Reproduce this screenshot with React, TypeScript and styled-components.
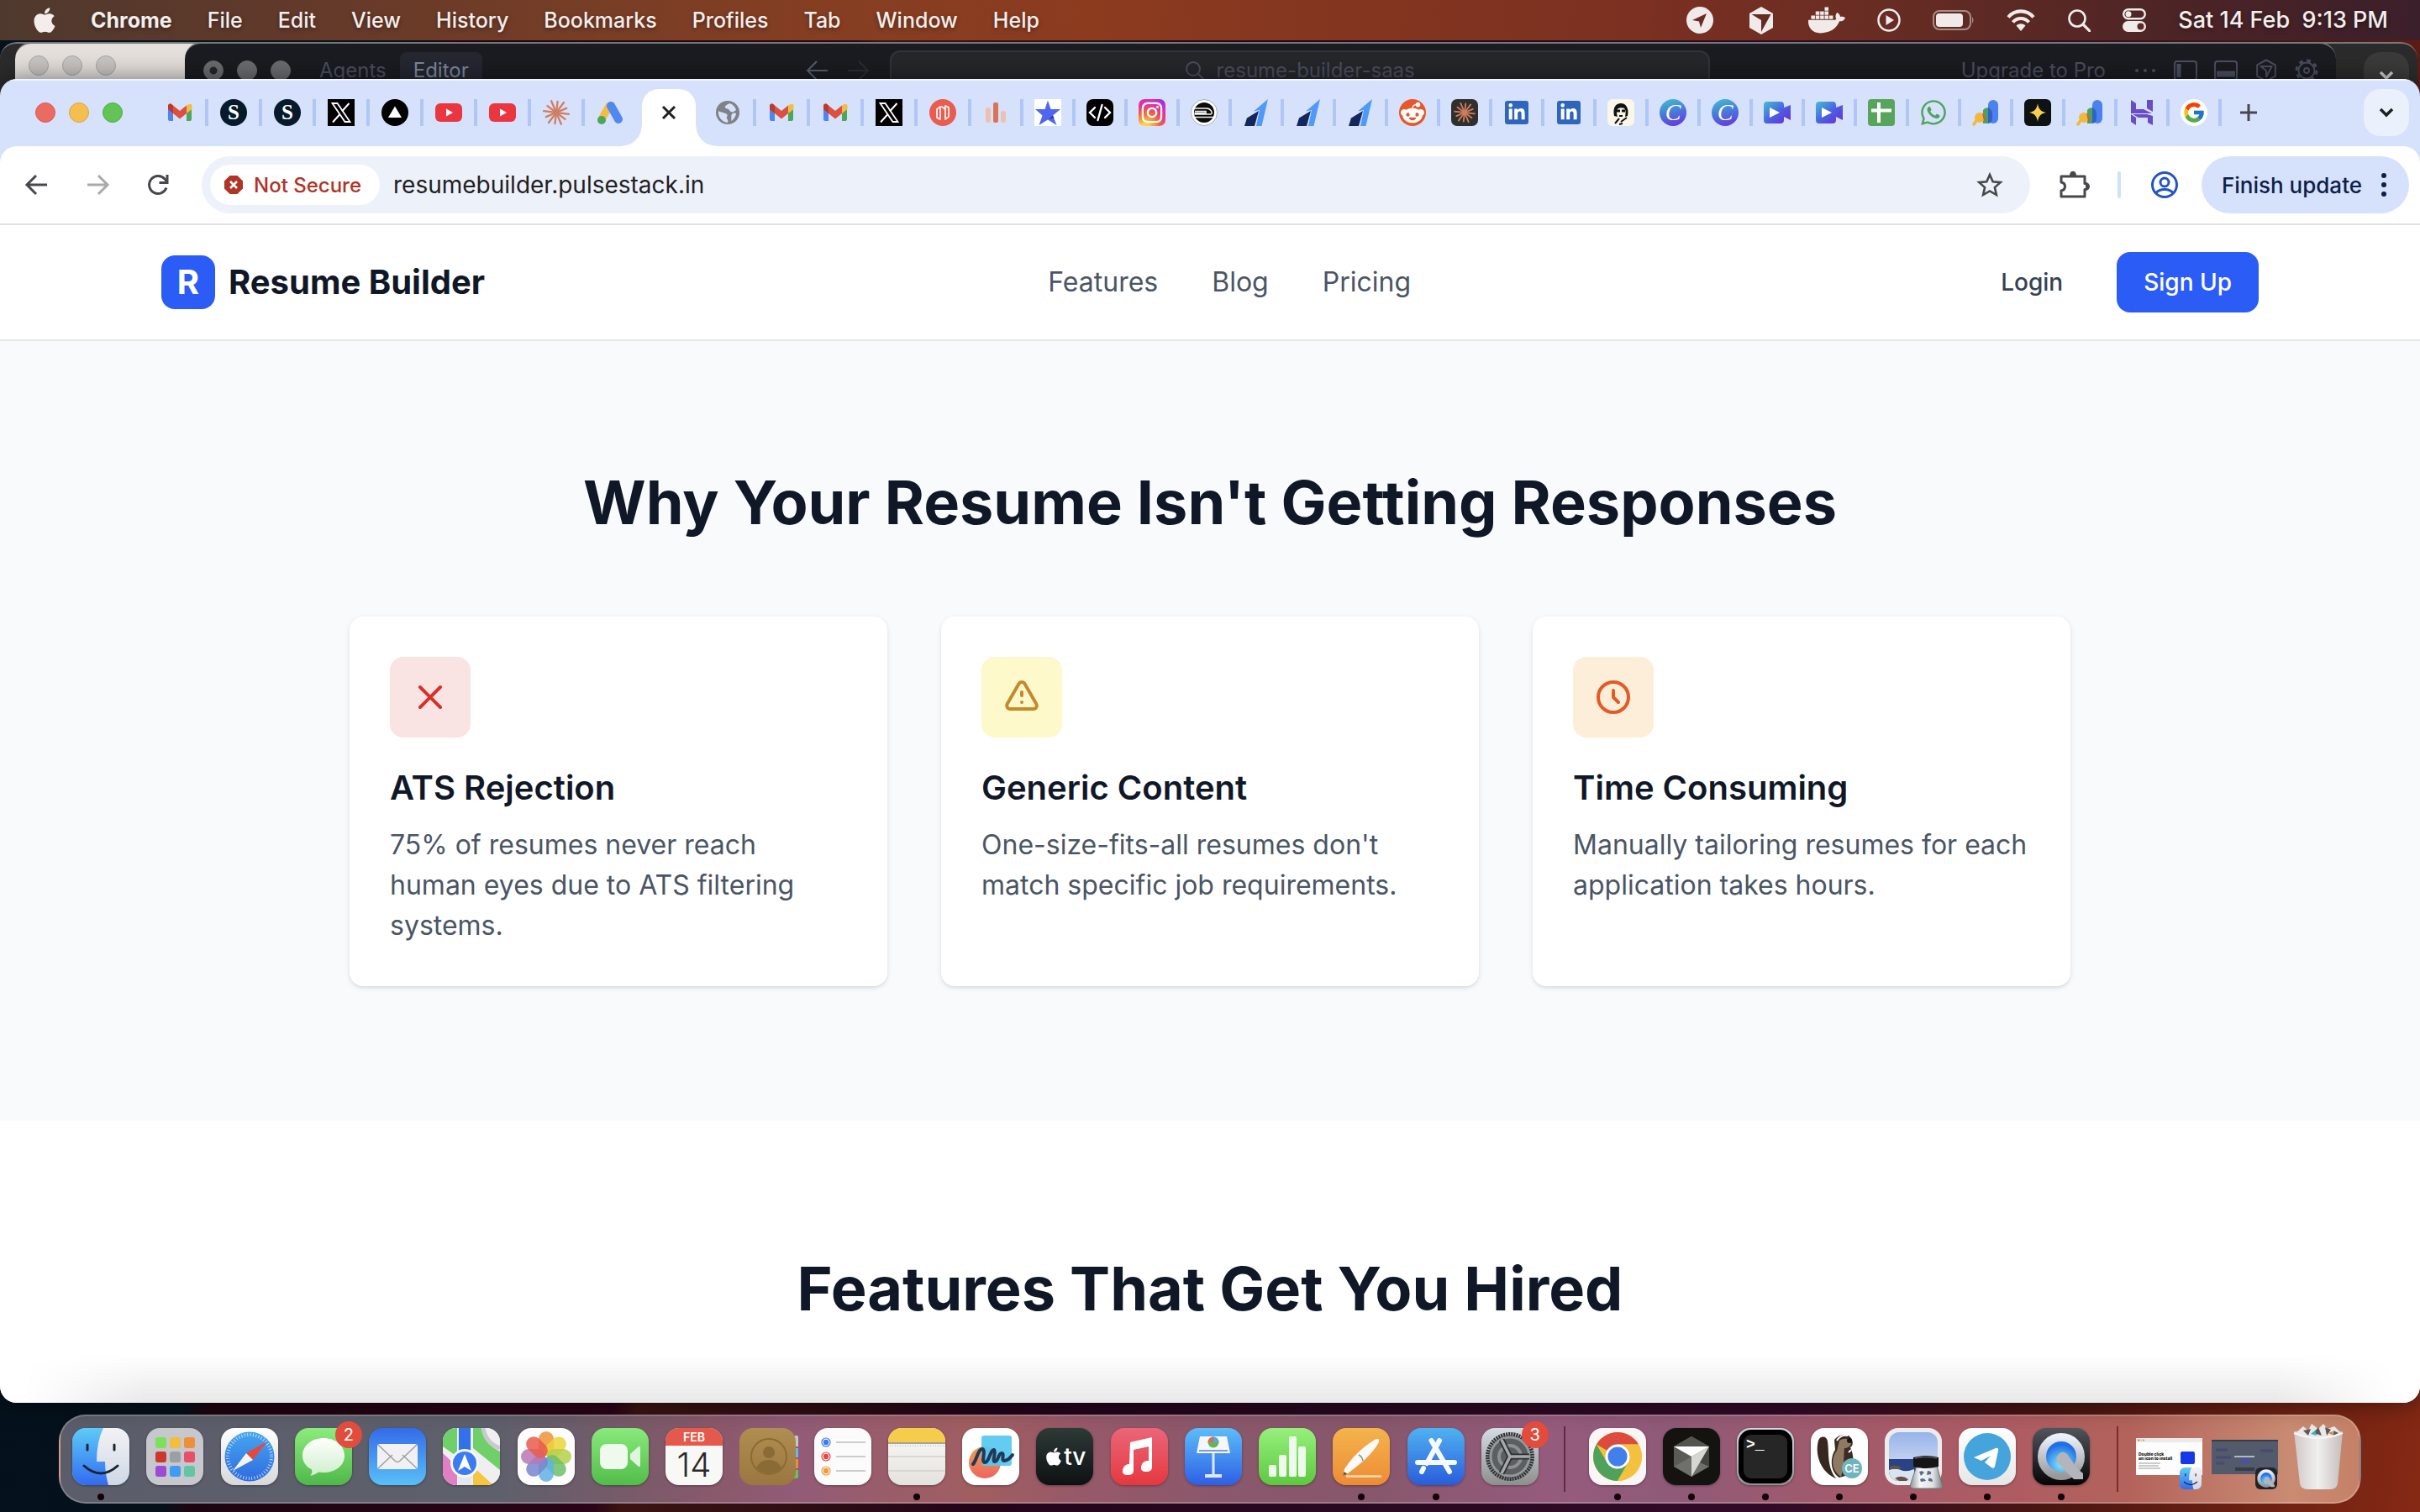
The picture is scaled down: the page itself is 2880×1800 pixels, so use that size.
import React, { ReactNode } from "react";
import styled, { createGlobalStyle } from "styled-components";
import { FaApple, FaDocker, FaLinkedinIn, FaWhatsapp, FaInstagram, FaRedditAlien } from "react-icons/fa6";
import { FcGoogle } from "react-icons/fc";

const GlobalStyle = createGlobalStyle`
  * { box-sizing: border-box; }
  body { margin: 0; font-family: Inter, "Liberation Sans", sans-serif; }
  button, input { font: inherit; color: inherit; border: 0; padding: 0; background: none; }
  a { color: inherit; text-decoration: none; }
  h1, h2, h3, p { margin: 0; }
  svg { display: block; flex: none; }
`;

/* ---------- Desktop ---------- */

const Desktop = styled.div`
  height: 100vh;
  display: flex;
  flex-direction: column;
  overflow: hidden;
  background: linear-gradient(100deg, #04121d 0%, #05101b 16%, #1e0410 17%, #2a0418 32%, #3b1412 33%, #2c0c14 41%, #22051a 46%, #2a0922 62%, #320a28 76%, #4a1612 86%, #862914 100%);
`;

const MenuBar = styled.header`
  height: 48px;
  flex: none;
  display: flex;
  align-items: center;
  justify-content: space-between;
  padding: 0 38px 0 40px;
  font-size: 25px;
  line-height: 32px;
  color: #f3eeec;
  text-shadow: 0 2px 5px rgba(0, 0, 0, 0.4);
  background: linear-gradient(90deg, #4f392e 0%, #62392a 12%, #783e26 25%, #853e22 34%, #8c3b1f 45%, #85361f 54%, #7b3021 68%, #672c23 78%, #4c2426 90%, #3b1f2a 100%);
`;

const MenuItems = styled.nav`
  display: flex;
  align-items: center;
  gap: 42px;
`;

const AppleMark = styled(FaApple)`
  width: 26px;
  height: 34px;
`;

const MenuButton = styled.button<{ $bold?: boolean }>`
  font-weight: ${(p) => (p.$bold ? 700 : 500)};
  text-shadow: inherit;
`;

const StatusItems = styled.div`
  display: flex;
  align-items: center;
  gap: 38px;
`;

const Clock = styled.time`
  font-size: 27px;
  font-weight: 500;
  white-space: pre;
`;

const BackWindows = styled.div`
  position: relative;
  height: 46px;
  flex: none;
`;

const BackWindow = styled.section<{ $left: number; $right: string; $bg: string }>`
  position: absolute;
  top: 2px;
  left: ${(p) => p.$left}px;
  right: ${(p) => p.$right};
  height: 80px;
  border-radius: 20px 20px 0 0;
  border-top: 2px solid #77787a;
  background: ${(p) => p.$bg};
  display: flex;
  align-items: flex-start;
  color: #4b5061;
  font-size: 24px;
  line-height: 32px;
`;

const Lights = styled.div<{ $pad: string }>`
  display: flex;
  gap: 16px;
  padding: ${(p) => p.$pad};
`;

const Light = styled.i<{ $color: string; $edge?: string; $dot?: boolean }>`
  width: 24px;
  height: 24px;
  border-radius: 50%;
  border: 1px solid ${(p) => p.$edge || p.$color};
  background: ${(p) => (p.$dot ? `radial-gradient(#26272a 4px, ${p.$color} 5px)` : p.$color)};
`;

const EditorTabs = styled.div`
  display: flex;
  padding: 10px 0 0 18px;
`;

const EditorTab = styled.button<{ $active?: boolean }>`
  height: 44px;
  padding: 0 16px;
  border-radius: 8px;
  color: ${(p) => (p.$active ? "#8189a0" : "#4b5061")};
  background: ${(p) => (p.$active ? "#252831" : "transparent")};
`;

const EditorCenter = styled.div`
  flex: 1;
  display: flex;
  justify-content: center;
  gap: 22px;
  padding: 8px 0 0 84px;
`;

const EditorArrows = styled.div`
  display: flex;
  gap: 16px;
  padding-top: 8px;
`;

const EditorSearch = styled.button`
  width: 976px;
  height: 48px;
  border: 2px solid #32343e;
  border-radius: 12px;
  background: #26272b;
  display: flex;
  align-items: center;
  justify-content: center;
  gap: 14px;
`;

const EditorTools = styled.div`
  display: flex;
  align-items: center;
  gap: 18px;
  padding: 16px 20px 0 0;
`;

const BackChevron = styled.span`
  margin: 10px 10px 0 auto;
  width: 54px;
  height: 56px;
  border-radius: 20px;
  background: #3b3b3b;
  display: grid;
  place-items: center;
`;

/* ---------- Browser ---------- */

const Browser = styled.section`
  position: relative;
  flex: 1;
  min-height: 0;
  display: flex;
  flex-direction: column;
  overflow: hidden;
  border-radius: 20px;
  background: #d6e1fb;
  box-shadow: 0 0 30px rgba(0, 0, 0, 0.5);
`;

const TabStrip = styled.div`
  height: 80px;
  flex: none;
  display: flex;
  align-items: center;
  box-shadow: inset 0 2px #f1f5fe;
`;

const TabSlot = styled.button<{ $wide?: boolean; $last?: boolean }>`
  width: ${(p) => (p.$wide ? 64 : 62)}px;
  height: 32px;
  display: flex;
  align-items: center;
  justify-content: center;
  border-right: 4px solid transparent;
  background: linear-gradient(${(p) => (p.$last ? "transparent, transparent" : "#afc6f6, #afc6f6")}) right / 4px 32px no-repeat border-box;
`;

const ActiveTab = styled.button`
  position: relative;
  align-self: flex-end;
  width: 64px;
  height: 68px;
  margin: 0 8px 0 4px;
  padding-bottom: 12px;
  border-radius: 20px 20px 0 0;
  background: #fff;
  display: grid;
  place-items: center;
  &::before, &::after {
    content: "";
    position: absolute;
    bottom: 0;
    width: 24px;
    height: 24px;
  }
  &::before { right: 100%; background: radial-gradient(circle at 0 0, transparent 23px, #fff 24px); }
  &::after { left: 100%; background: radial-gradient(circle at 100% 0, transparent 23px, #fff 24px); }
`;

const NewTab = styled.button`
  width: 64px;
  display: grid;
  place-items: center;
`;

const TabSearch = styled.button`
  margin: 0 13px 0 auto;
  width: 54px;
  height: 56px;
  border-radius: 20px;
  background: #eaf1fc;
  display: grid;
  place-items: center;
`;

const Toolbar = styled.div`
  height: 94px;
  flex: none;
  display: flex;
  align-items: center;
  padding: 0 13px 0 28px;
  border-radius: 20px 20px 0 0;
  border-bottom: 2px solid #e1e2e4;
  background: #fff;
  color: #47484b;
`;

const ToolButtons = styled.div`
  display: flex;
  gap: 40px;
  margin-right: 36px;
`;

const IconButton = styled.button`
  display: grid;
  place-items: center;
`;

const Omnibox = styled.div`
  flex: 1;
  height: 68px;
  border-radius: 34px;
  background: #edf1f9;
  display: flex;
  align-items: center;
  padding: 0 32px 0 10px;
`;

const SecurityChip = styled.button`
  height: 48px;
  padding: 0 22px 0 16px;
  border-radius: 24px;
  background: #fff;
  color: #b03427;
  font-size: 24px;
  font-weight: 500;
  display: flex;
  align-items: center;
  gap: 12px;
`;

const Address = styled.input`
  flex: 1;
  margin-left: 16px;
  font-size: 28px;
  line-height: 32px;
  color: #1f2023;
  outline: none;
`;

const ToolDivider = styled.span`
  width: 4px;
  height: 32px;
  margin-right: 36px;
  border-radius: 2px;
  background: #d3e0fb;
`;

const UpdateButton = styled.button`
  height: 68px;
  margin-left: 28px;
  padding: 0 24px;
  border-radius: 34px;
  background: #d6e1fb;
  color: #0c1f4a;
  font-size: 26px;
  font-weight: 500;
  display: flex;
  align-items: center;
  gap: 20px;
`;

/* ---------- Web page ---------- */

const Page = styled.main`
  flex: 1;
  min-height: 0;
  overflow: hidden;
  display: flex;
  flex-direction: column;
  background: #fff;
  color: #101828;
`;

const SiteHeader = styled.header`
  flex: none;
  border-bottom: 2px solid #e5e7eb;
`;

const SiteHeaderInner = styled.div`
  max-width: 2560px;
  height: 136px;
  margin: 0 auto;
  padding: 0 32px;
  display: flex;
  align-items: center;
  justify-content: space-between;
`;

const Brand = styled.a`
  display: flex;
  align-items: center;
  gap: 16px;
  font-size: 40px;
  line-height: 56px;
  font-weight: 700;
`;

const BrandMark = styled.span`
  width: 64px;
  height: 64px;
  border-radius: 16px;
  background: #2c5cf6;
  color: #fff;
  display: grid;
  place-items: center;
`;

const SiteLinks = styled.nav`
  display: flex;
  gap: 64px;
  font-size: 32px;
  line-height: 48px;
  color: #4a5565;
`;

const Actions = styled.div`
  display: flex;
  gap: 32px;
`;

const ActionButton = styled.button<{ $primary?: boolean }>`
  height: 72px;
  padding: 0 32px;
  border-radius: 16px;
  font-size: 28px;
  font-weight: 500;
  color: ${(p) => (p.$primary ? "#fff" : "#364153")};
  background: ${(p) => (p.$primary ? "#2c5cf6" : "transparent")};
`;

const Problems = styled.section`
  flex: none;
  padding: 152px 32px 160px;
  background: #f9fafc;
`;

const Features = styled.section`
  padding: 160px 32px;
`;

const SectionTitle = styled.h2`
  font-size: 72px;
  line-height: 80px;
  font-weight: 700;
  text-align: center;
`;

const CardGrid = styled.div`
  max-width: 2048px;
  margin: 96px auto 0;
  display: grid;
  grid-template-columns: repeat(3, 1fr);
  gap: 64px;
`;

const Card = styled.article`
  padding: 48px;
  border-radius: 16px;
  background: #fff;
  box-shadow: 0 2px 6px rgba(0, 0, 0, 0.1), 0 2px 4px -2px rgba(0, 0, 0, 0.1);
`;

const CardIcon = styled.div<{ $bg: string; $color: string }>`
  width: 96px;
  height: 96px;
  margin-bottom: 32px;
  border-radius: 16px;
  background: ${(p) => p.$bg};
  color: ${(p) => p.$color};
  display: grid;
  place-items: center;
`;

const CardTitle = styled.h3`
  margin-bottom: 16px;
  font-size: 40px;
  line-height: 56px;
  font-weight: 600;
`;

const CardText = styled.p`
  font-size: 32px;
  line-height: 48px;
  color: #4a5565;
`;

const DockShade = styled.div`
  position: absolute;
  left: 0;
  right: 0;
  bottom: 0;
  height: 56px;
  pointer-events: none;
  background: linear-gradient(rgba(0, 0, 0, 0), rgba(0, 0, 0, 0.09));
  mask-image: linear-gradient(90deg, transparent 1%, #000 6%, #000 94%, transparent 99%);
`;

/* ---------- Dock ---------- */

const DockArea = styled.footer`
  height: 130px;
  flex: none;
  padding: 14px 70px 10px;
`;

const Dock = styled.div`
  height: 106px;
  display: flex;
  align-items: flex-start;
  padding: 14px 19px 0 14px;
  border: 2px solid rgba(255, 255, 255, 0.22);
  border-radius: 32px;
  background: linear-gradient(90deg, #5b5e6a 0%, #5e606c 19%, #7a5a69 25%, #8b596c 29%, #925b78 32%, #9c5d66 37%, #a05e60 40%, #985969 44%, #8b586b 50%, #87576c 57%, #955b7d 65%, #8f5a78 70%, #a15a6c 77%, #ae5c62 85%, #b3635b 90%, #c98b72 97%, #c58167 100%);
`;

const DockGroup = styled.div<{ $grow?: boolean }>`
  display: flex;
  gap: 20px;
  flex: ${(p) => (p.$grow ? "1" : "none")};
  justify-content: space-between;
`;

const DockDivider = styled.span<{ $color: string; $tight?: boolean }>`
  width: 2px;
  height: 78px;
  margin: ${(p) => (p.$tight ? "-2px 21px 0 32px" : "-2px 28px 0 30px")};
  background: ${(p) => p.$color};
`;

const DockItem = styled.button`
  position: relative;
  width: 68px;
  display: flex;
  flex-direction: column;
  align-items: center;
  gap: 10px;
`;

const Tile = styled.span<{ $bg: string }>`
  position: relative;
  width: 68px;
  height: 68px;
  border-radius: 16px;
  overflow: hidden;
  background: ${(p) => p.$bg};
  box-shadow: 0 1px 3px rgba(0, 0, 0, 0.35);
`;

const FreeTile = styled.span`
  width: 68px;
  height: 68px;
`;

const RunningDot = styled.span`
  width: 8px;
  height: 8px;
  border-radius: 50%;
  background: #120208;
`;

const Badge = styled.span`
  position: absolute;
  top: -8px;
  right: -12px;
  width: 32px;
  height: 32px;
  border-radius: 50%;
  background: #e24c3c;
  color: #fff;
  font-size: 20px;
  line-height: 32px;
  text-align: center;
`;

const CalendarFace = styled.span`
  display: flex;
  flex-direction: column;
  align-items: center;
  color: #2a2a2a;
  font-size: 40px;
  line-height: 46px;
  font-weight: 300;
`;

const CalendarMonth = styled.span`
  width: 100%;
  height: 21px;
  background: #e4594c;
  color: #fff;
  font-size: 14px;
  line-height: 22px;
  font-weight: 600;
  text-align: center;
`;

const TvFace = styled.span`
  height: 100%;
  display: flex;
  align-items: center;
  justify-content: center;
  color: #fff;
  font-size: 28px;
  line-height: 32px;
  font-weight: 500;
`;

const TerminalFace = styled.span`
  display: block;
  height: 64px;
  margin: 2px;
  padding: 2px 3px;
  border: 6px solid #000;
  border-radius: 15px;
  background: #262626;
  color: #fff;
  font-family: "Liberation Mono", monospace;
  font-size: 18px;
  line-height: 20px;
  font-weight: 700;
  text-align: left;
`;

const Thumbs = styled.div`
  display: flex;
  gap: 11px;
  margin-right: 18px;
`;

const Thumb = styled.button`
  padding-top: 12px;
`;

const TrashButton = styled.button`
  margin-top: -6px;
`;

/* ---------- Favicons ---------- */

const FavBox = styled.span<{ $bg: string; $radius: number; $size?: number; $serif?: boolean; $fs?: number }>`
  width: ${(p) => p.$size || 32}px;
  height: ${(p) => p.$size || 32}px;
  border-radius: ${(p) => p.$radius}px;
  background: ${(p) => p.$bg};
  color: #fff;
  display: grid;
  place-items: center;
  overflow: hidden;
  font-family: ${(p) => (p.$serif ? '"Liberation Serif", serif' : "inherit")};
  font-size: ${(p) => p.$fs || 22}px;
  line-height: 32px;
  font-weight: 700;
`;

const ScriptC = styled.i`
  font-family: "Liberation Serif", serif;
  font-size: 28px;
  font-weight: 400;
  line-height: 32px;
`;

const Svg = ({ s = 32, h, vb, children }: { s?: number; h?: number; vb?: string; children: ReactNode }) => (
  <svg width={s} height={h || s} viewBox={vb || `0 0 ${s} ${h || s}`} fill="none" aria-hidden="true">
    {children}
  </svg>
);

const Gmail = () => (
  <Svg>
    <path d="M2 8v16a2 2 0 0 0 2 2h4V14z" fill="#4d86ee" />
    <path d="M30 8v16a2 2 0 0 1-2 2h-4V14z" fill="#4ea65a" />
    <path d="M24 7.500 27 6c2-1 3.500.5 3.500 2.500V12L24 17z" fill="#f3bd42" />
    <path d="M2 8.500C2 6 4 5 6 6l10 8 8-6.500V17l-8 6.500L8 17l-6-5z" fill="#dd4f3e" />
    <path d="M2 8.500C2 6 4 5 6 6l2 1.600V17l-6-5z" fill="#b93a30" />
  </Svg>
);

const Stripe = () => <FavBox $bg="#071a2b" $radius={16} $serif $fs={25}>S</FavBox>;

const XLogo = () => (
  <FavBox $bg="#000" $radius={0}>
    <Svg>
      <path d="M5.500 5h6L26.500 27h-6z" stroke="#fff" strokeWidth="1.800" />
      <path d="M25.500 5 17 14.500M14.500 18 6 27.500" stroke="#fff" strokeWidth="2" />
    </Svg>
  </FavBox>
);

const Vercel = () => (
  <FavBox $bg="#000" $radius={16}>
    <Svg><path d="M16 8.500 24 22H8z" fill="#fff" /></Svg>
  </FavBox>
);

const Youtube = () => (
  <Svg>
    <rect x="0" y="5" width="32" height="22" rx="6" fill="#eb3640" />
    <path d="M13 11.500v9l8-4.500z" fill="#fff" />
  </Svg>
);

const Burst = ({ color, r }: { color: string; r: number }) => (
  <g stroke={color} strokeWidth={r / 6.5} strokeLinecap="round">
    {Array.from({ length: 12 }, (_, i) => {
      const a = (i * Math.PI) / 6 + 0.12;
      const len = r * (i % 2 ? 0.88 : 1);
      return <path key={i} d={`M16 16L${16 + Math.cos(a) * len} ${16 + Math.sin(a) * len}`} />;
    })}
  </g>
);

const Claude = () => <Svg><Burst color="#cf7f63" r={15} /></Svg>;
const ClaudeDark = () => <FavBox $bg="#2f302d" $radius={7}><Svg><Burst color="#d07c5e" r={12} /></Svg></FavBox>;

const Ads = () => (
  <Svg>
    <path d="M15 8 6 24" stroke="#f2bd42" strokeWidth="9" strokeLinecap="round" />
    <path d="M17 8l9 16" stroke="#4f88ef" strokeWidth="10" strokeLinecap="round" />
    <circle cx="6" cy="25" r="5" fill="#4fa45c" />
  </Svg>
);

const Globe = () => (
  <Svg>
    <circle cx="16" cy="16" r="14" fill="#7f8286" />
    <path d="M5 14c3 2 8 2 10 4s-1 3 0 5 2 3 1 5C9 27 4 21 5 14z" fill="#d6e1fb" />
    <path d="M18 5c-3 2-6 3-5 5s4 1 5 3 3 3 5 2l3-2C25 9 22 6 18 5zM22 17c3-1 4 0 4 1-1 4-4 7-6 8 1-3-1-7 2-9z" fill="#d6e1fb" />
  </Svg>
);

const MapPin = () => (
  <FavBox $bg="#ea5b50" $radius={16}>
    <Svg>
      <path d="M13 24 9 22V12l4-3zM19 8l4 2v11l-4 3z" stroke="#fbe3df" strokeWidth="2" strokeLinejoin="round" />
      <path d="M13 9c3 0 6 2 6 5" stroke="#fbe3df" strokeWidth="2" />
    </Svg>
  </FavBox>
);

const Bars = () => (
  <Svg>
    <rect x="4" y="10" width="6" height="18" rx="3" fill="#ecc0b4" />
    <rect x="13" y="4" width="6" height="24" rx="2" fill="#d97556" />
    <rect x="22" y="14" width="6" height="14" rx="3" fill="#ecc0b4" />
  </Svg>
);

const Star = () => (
  <FavBox $bg="#fff" $radius={0}>
    <Svg>
      <path d="M16 1.500 19.500 12H31l-9 7.500L26.500 31 16 24.500 5.500 31 9.500 19.500 1 12h11.500z" fill="#5166f0" />
      <path d="M22 19.500 17 24l6.500-1.500z" fill="#2c36a8" />
    </Svg>
  </FavBox>
);

const Code = () => (
  <FavBox $bg="#000" $radius={8}>
    <Svg><path d="M10 10l-6 6 6 6M22 10l6 6-6 6M18.500 7l-5 18" stroke="#fff" strokeWidth="2.400" strokeLinecap="round" /></Svg>
  </FavBox>
);

const Insta = () => (
  <FavBox $bg="radial-gradient(circle at 25% 105%, #f9d24c 0 12%, #f0653e 42%, #e0359a 66%, #d12fc4 80%, #6a2cf0 100%)" $radius={7}>
    <FaInstagram size={28} />
  </FavBox>
);

const Disc = () => (
  <Svg>
    <circle cx="16" cy="16" r="15.500" fill="#fff" stroke="#a9adb8" />
    <circle cx="16" cy="16" r="12" fill="#0b0b0b" />
    <path d="M5 11h14c5 0 8 6 5 7H4.500M5 14.500h13v2H4.500M5 21.500h23" stroke="#f4f4f4" strokeWidth="1.500" />
  </Svg>
);

const Jet = () => (
  <Svg>
    <path d="M30 0 13 14.500l7-1.500-4 19h6.500z" fill="#4f9af8" />
    <path d="M19 14 5 22.500 2 32h12z" fill="#14275c" />
  </Svg>
);

const Reddit = () => (
  <FavBox $bg="#e8562c" $radius={16}><FaRedditAlien size={28} /></FavBox>
);

const LinkedIn = () => <FavBox $bg="#2f65bc" $radius={3} $size={28}><FaLinkedinIn size={22} /></FavBox>;

const Portrait = () => (
  <FavBox $bg="#fbf6ea" $radius={6}>
    <Svg>
      <path d="M8 20C6 10 10 5 16 5s10 6 8 15l-3 1c1-5 1-8-1-10-2-1-5-1-7 0-3 2-2 6-1 10z" fill="#111" />
      <path d="M11 14h4M17 14h4" stroke="#111" strokeWidth="3" />
      <path d="M14 20h4M9 29l5-6M16 27l7-5M14 30l4-1" stroke="#111" strokeWidth="2" />
    </Svg>
  </FavBox>
);

const Canva = () => <FavBox $bg="linear-gradient(165deg, #3fc3cf, #4a76dc 50%, #6a2ee0)" $radius={16}><ScriptC>C</ScriptC></FavBox>;

const VideoCam = () => (
  <Svg>
    <defs>
      <linearGradient id="cam" x1="0" y1="0" x2="1" y2="1">
        <stop stopColor="#47bcd6" /><stop offset=".5" stopColor="#4a62e0" /><stop offset="1" stopColor="#7027dc" />
      </linearGradient>
    </defs>
    <path d="M4 3h16a4 4 0 0 1 4 4v3l8-3v18l-8-4v4a4 4 0 0 1-4 4H4a4 4 0 0 1-4-4V7a4 4 0 0 1 4-4z" fill="url(#cam)" />
    <path d="M7 10v12l12-6z" fill="#fff" />
  </Svg>
);

const Sheet = () => (
  <FavBox $bg="#57a55a" $radius={4}>
    <Svg><path d="M4 13.500h24M13 4v24" stroke="#fff" strokeWidth="4" /></Svg>
  </FavBox>
);

const Analytics = () => (
  <Svg>
    <rect x="19" y="1" width="12" height="28" rx="6" fill="#4c82ee" />
    <path d="M13 13a6 6 0 0 1 11 4v6a6 6 0 0 1-6 6h-5z" fill="#4fa05a" />
    <path d="M19 9.500q5 3 5 8V23a6 6 0 0 1-5 6z" fill="#2f62cc" />
    <path d="M2 30l6-9" stroke="#f0b93c" strokeWidth="3.500" strokeLinecap="round" />
    <circle cx="9" cy="22" r="6" fill="#f0b93c" />
    <path d="M12 16.500a7 7 0 0 1 2 10z" fill="#e0523e" />
  </Svg>
);

const Sparkle = () => (
  <FavBox $bg="#0e1213" $radius={6}>
    <Svg><path d="M16 5c1 7 4 10 10 11-6 1-9 4-10 11-1-7-4-10-10-11 6-1 9-4 10-11z" fill="#f6d24a" /></Svg>
  </FavBox>
);

const HLogo = () => (
  <Svg>
    <path d="M3 1l6 4v7h9l10 5H3zM22 1h7v14l-7-4z" fill="#6a4cc6" />
    <path d="M3 18l6 4v9l-6-4zM5 18h17l7 2v11l-6-3v-6H12z" fill="#6a4cc6" />
  </Svg>
);

const Google = () => <FavBox $bg="#fff" $radius={16}><FcGoogle size={28} /></FavBox>;
const Whatsapp = () => <FaWhatsapp size={34} color="#4fa35f" />;

type Tab = [string, () => React.JSX.Element];

const leftTabs: Tab[] = [
  ["Mail", Gmail], ["Payments", Stripe], ["Payments", Stripe], ["X", XLogo], ["Deployments", Vercel],
  ["YouTube", Youtube], ["YouTube", Youtube], ["Claude", Claude], ["Ads", Ads],
];
const middleTabs: Tab[] = [
  ["Page", Globe], ["Mail", Gmail], ["Mail", Gmail], ["X", XLogo], ["Map", MapPin],
];
const rightTabs: Tab[] = [
  ["Stats", Bars], ["Star", Star], ["Code", Code], ["Instagram", Insta], ["Disc", Disc],
  ["Jet", Jet], ["Jet", Jet], ["Jet", Jet], ["Reddit", Reddit], ["Claude", ClaudeDark],
  ["LinkedIn", LinkedIn], ["LinkedIn", LinkedIn], ["Portrait", Portrait], ["Canva", Canva], ["Canva", Canva],
  ["Video", VideoCam], ["Video", VideoCam], ["Sheet", Sheet], ["WhatsApp", Whatsapp], ["Analytics", Analytics],
  ["Sparkle", Sparkle], ["Analytics", Analytics], ["Hosting", HLogo], ["Google", Google],
];

/* ---------- Interface glyphs ---------- */

const Chevron = ({ color }: { color: string }) => (
  <Svg s={20}><path d="M3 6l7 7 7-7" stroke={color} strokeWidth="3.500" /></Svg>
);

const Arrow = ({ color, flip, w = 3 }: { color: string; flip?: boolean; w?: number }) => (
  <Svg s={32}>
    <path d={flip ? "M4 16h23M17 5l11 11-11 11" : "M28 16H5M15 5L4 16l11 11"} stroke={color} strokeWidth={w} />
  </Svg>
);

const Cube = ({ s, color, line }: { s: number; color: string; line?: boolean }) => (
  <Svg s={s} vb="0 0 36 36">
    {line ? (
      <path d="M18 3l13 7v16l-13 7-13-7V10zM10 12h16l-8 15v-9z" stroke={color} strokeWidth="2.400" strokeLinejoin="round" />
    ) : (
      <>
        <path d="M18 2l14 8v17l-14 8-14-8V10z" fill={color} />
        <path d="M6.500 11h23L18 32V18z" fill="#642b23" />
      </>
    )}
  </Svg>
);

const StatusIcons = () => (
  <>
    <Svg s={34}>
      <circle cx="17" cy="17" r="16" fill="#f0ebe9" />
      <path d="M25 9 8 17l8 1.500L18 26z" fill="#6a2b22" />
    </Svg>
    <Cube s={36} color="#f0ebe9" />
    <FaDocker size={44} color="#f0ebe9" />
    <Svg s={28} h={30}>
      <circle cx="14" cy="15" r="12.500" stroke="#f0ebe9" strokeWidth="2.500" />
      <path d="M10.500 9v12l9.500-6z" fill="#f0ebe9" />
    </Svg>
    <Svg s={50} h={26}>
      <rect x="1" y="2" width="44" height="22" rx="7" stroke="#f0ebe9" strokeOpacity=".5" strokeWidth="2" />
      <rect x="4" y="5" width="32" height="16" rx="4" fill="#f0ebe9" />
      <path d="M47 9q3 4 0 8z" fill="#f0ebe9" fillOpacity=".5" />
    </Svg>
    <Svg s={34} h={28}>
      <path d="M2 10.500C10 1 24 1 32 10.500M7.500 16.500c5-6 14-6 19 0" stroke="#f0ebe9" strokeWidth="4.200" />
      <path d="M11.500 20.500c3-3 8-3 11 0L17 27z" fill="#f0ebe9" />
    </Svg>
    <Svg s={28}>
      <circle cx="12" cy="12" r="9.500" stroke="#f0ebe9" strokeWidth="2.600" />
      <path d="M19 19l8 8" stroke="#f0ebe9" strokeWidth="3.200" strokeLinecap="round" />
    </Svg>
    <Svg s={28}>
      <rect x="1.200" y="1.200" width="25.600" height="11" rx="5.500" stroke="#f0ebe9" strokeWidth="2.400" />
      <circle cx="7" cy="6.700" r="3.500" fill="#f0ebe9" />
      <rect x="0" y="15" width="28" height="13" rx="6.500" fill="#f0ebe9" />
      <circle cx="21.500" cy="21.500" r="4" fill="#5a2a28" />
    </Svg>
  </>
);

/* ---------- Dock icons ---------- */

const FinderArt = ({ s = 68 }: { s?: number }) => (
  <Svg s={s} vb="0 0 68 68">
    <defs>
      <linearGradient id="fb" x2="0" y2="1"><stop stopColor="#5ecbf8" /><stop offset="1" stopColor="#326bf0" /></linearGradient>
      <linearGradient id="fw" x2="0" y2="1"><stop stopColor="#f3f2f4" /><stop offset="1" stopColor="#cfd8e6" /></linearGradient>
    </defs>
    <rect width="68" height="68" rx="16" fill="url(#fb)" />
    <path d="M37 0h15a16 16 0 0 1 16 16v36a16 16 0 0 1-16 16h-9q-4-14-4-28h-10q0-24 8-40z" fill="url(#fw)" />
    <path d="M18 20v6M50 20v6M14 45q20 18 40 0" stroke="#1b2433" strokeWidth="3" strokeLinecap="round" />
  </Svg>
);

const LaunchpadArt = () => (
  <Svg s={68}>
    {["#7ce05a", "#f3bd3e", "#ee9038", "#cd382c", "#9aa0a4", "#ea4f68", "#9d4ad6", "#3f9cf4", "#62c6a2"].map((c, i) => (
      <rect key={c} x={11 + (i % 3) * 17} y={11 + Math.floor(i / 3) * 17} width="13" height="13" rx="3" fill={c} />
    ))}
  </Svg>
);

const SafariArt = () => (
  <Svg s={68}>
    <defs><linearGradient id="sf" x2="0" y2="1"><stop stopColor="#46a6f0" /><stop offset="1" stopColor="#2f6be0" /></linearGradient></defs>
    <circle cx="34" cy="34" r="29.500" fill="url(#sf)" />
    <circle cx="34" cy="34" r="26" stroke="#dcecfc" strokeWidth="4" strokeDasharray=".8 2.600" />
    <path d="M55 16 30 30l8 8z" fill="#e5483b" />
    <path d="M14 51 30 30l8 8z" fill="#f4f4f4" />
  </Svg>
);

const MessagesArt = () => (
  <Svg s={68}>
    <defs><linearGradient id="mb" x2="0" y2="1"><stop stopColor="#fff" /><stop offset="1" stopColor="#cfeecb" /></linearGradient></defs>
    <path d="M34 12c14 0 25 9 25 21S48 53 34 53l-6-.5c-3 2-6 4-10 4 2-2 3-4 2-7C13 46 9 40 9 33c0-12 11-21 25-21z" fill="url(#mb)" />
  </Svg>
);

const MailArt = () => (
  <Svg s={68}>
    <rect x="10" y="19" width="48" height="30" rx="3" fill="#f1f1f3" />
    <path d="M11 48l17-16M57 48L40 32M11 20l20 19q3 3 6 0l20-19" stroke="#9aa0a8" strokeWidth="1.500" />
  </Svg>
);

const MapsArt = () => (
  <Svg s={68}>
    <rect width="68" height="68" fill="#efeff2" />
    <path d="M0 0h17v34L0 22zM36 0h10q2 18 22 28v22L36 24z" fill="#6fcf68" />
    <path d="M0 30l17 16v22H0z" fill="#e07fc4" />
    <path d="M36 46l24 22H36z" fill="#f2c63e" />
    <path d="M48 0q3 18 20 24" stroke="#c9c9d0" strokeWidth="5" />
    <path d="M18 0h16v68H18z" fill="#e5e7ee" />
    <path d="M19 0h14v28H19z" fill="#3271e8" />
    <circle cx="26" cy="42" r="17" fill="#f5f7fb" />
    <circle cx="26" cy="42" r="14" fill="#3b7df0" />
    <path d="M26 31l8 20-8-5-8 5z" fill="#fff" />
  </Svg>
);

const PhotosArt = () => (
  <Svg s={68}>
    {["#f0923a", "#ecd23a", "#b5d04a", "#6fbf6a", "#62b0e4", "#7886cf", "#b878b4", "#ea5a4c"].map((c, i) => (
      <rect key={c} x="25" y="4" width="18" height="29" rx="9" fill={c} fillOpacity=".85" transform={`rotate(${i * 45} 34 34)`} />
    ))}
  </Svg>
);

const FaceTimeArt = () => (
  <Svg s={68}>
    <rect x="10" y="19" width="33" height="30" rx="8" fill="#eefbec" />
    <path d="M46 31l10-9q2-1 2 2v20q0 3-2 2l-10-9z" fill="#dff5dc" />
  </Svg>
);

const ContactsArt = () => (
  <Svg s={72} h={68} vb="0 0 72 68">
    <defs><linearGradient id="ct" x2="0" y2="1"><stop stopColor="#b08d50" /><stop offset="1" stopColor="#9b7740" /></linearGradient></defs>
    <path d="M62 9h6a2 2 0 0 1 2 2v11h-8z" fill="#c8c8cc" /><path d="M62 24h8v11h-8z" fill="#6bb8ea" /><path d="M62 37h8v11h-8z" fill="#ea8f38" /><path d="M62 50h8v8a2 2 0 0 1-2 2h-6z" fill="#68c35e" />
    <rect width="67" height="68" rx="16" fill="url(#ct)" />
    <circle cx="35" cy="34" r="21" stroke="#8a6a35" strokeWidth="2" />
    <circle cx="35" cy="29" r="7" fill="#8a6a35" />
    <path d="M20 47q5-9 15-9t15 9q-6 7-15 7t-15-7z" fill="#8a6a35" />
  </Svg>
);

const RemindersArt = () => (
  <Svg s={68}>
    {["#3a7bee", "#e5493c", "#ee9a3a"].map((c, i) => (
      <g key={c}>
        <circle cx="14" cy={17 + i * 17} r="5" stroke={c} strokeWidth="1.200" />
        <circle cx="14" cy={17 + i * 17} r="3.200" fill={c} />
        <path d={`M26 ${17 + i * 17}h35`} stroke="#bdbdbf" strokeWidth="1.500" />
      </g>
    ))}
  </Svg>
);

const NotesArt = () => (
  <Svg s={68}>
    <path d="M0 0h68v17H0z" fill="#f5cd4a" />
    <path d="M0 18h68" stroke="#8c8778" strokeWidth="1.500" />
    <path d="M2 21h66" stroke="#b5b2aa" strokeDasharray="1 2" />
    <path d="M0 34h68M0 51h68" stroke="#d3d1cc" strokeWidth="1.500" />
  </Svg>
);

const FreeformArt = () => (
  <Svg s={68}>
    <defs><linearGradient id="fr" x2="0" y2="1"><stop stopColor="#f2a04e" /><stop offset="1" stopColor="#ec6560" /></linearGradient></defs>
    <circle cx="27" cy="41" r="19" fill="url(#fr)" />
    <rect x="23" y="9" width="36" height="36" rx="3" fill="#56c8f0" fillOpacity=".92" />
    <path d="M13 43c4-4 6-18 11-18 5 1-2 16 3 16s7-16 11-15c3 2-3 14 1 14s4-10 8-10-1 9 3 9 7-3 10-7" stroke="#1d3a5c" strokeWidth="4" strokeLinecap="round" />
  </Svg>
);

const MusicArt = () => (
  <Svg s={68}>
    <path d="M23 17l26-6v36q0 5-7 5t-6-6 7-7h2V22l-18 4v25q0 5-7 5t-6-6 7-7h1z" fill="#fff" />
  </Svg>
);

const KeynoteArt = () => (
  <Svg s={68}>
    <path d="M18 10h32l4 20H14z" fill="#f5f7fb" />
    <path d="M17 27h34" stroke="#7ba0c8" strokeWidth="2" />
    <circle cx="34" cy="17" r="6.500" fill="#68b25c" />
    <path d="M34 17v-6.500a6.500 6.500 0 0 1 6.500 6.500z" fill="#56a7e4" /><path d="M34 17h-6.500a6.500 6.500 0 0 1 6.500-6.500z" fill="#e36a50" />
    <path d="M34 30v27" stroke="#dfe8f5" strokeWidth="3" />
    <path d="M24 57h20" stroke="#dfe8f5" strokeWidth="4" />
  </Svg>
);

const NumbersArt = () => (
  <Svg s={68}>
    {[[12, 44, 14], [24, 32, 26], [36, 10, 48], [47, 22, 36]].map(([x, y, h]) => (
      <rect key={x} x={x} y={y} width="9" height={h} rx="2" fill="#eefbec" />
    ))}
  </Svg>
);

const PagesArt = () => (
  <Svg s={68}>
    <path d="M12 57l2-8C22 36 34 24 50 14q6-3 5 3C47 31 33 43 18 54z" fill="#fbfaf8" />
    <path d="M31 32q4 2 5 7" stroke="#8e8a85" strokeWidth="1.500" />
    <path d="M12 57l1.500-5 4 2.500z" fill="#5c5550" />
    <path d="M16 57.500h42" stroke="#fbdcb4" strokeWidth="2.500" />
  </Svg>
);

const AppStoreArt = () => (
  <Svg s={68}>
    <path d="M38 15 23 42M28.500 15 50 52M19 48l-2 4" stroke="#f6f9fe" strokeWidth="6" strokeLinecap="round" />
    <path d="M12 41h44" stroke="#f6f9fe" strokeWidth="6" strokeLinecap="round" />
  </Svg>
);

const SettingsArt = () => (
  <Svg s={68}>
    <circle cx="34" cy="34" r="26" fill="#8c9092" stroke="#2f3133" strokeWidth="6" strokeDasharray="2 1" />
    <circle cx="34" cy="34" r="23" fill="#5c5f61" stroke="#96999b" strokeWidth="3" />
    <circle cx="34" cy="34" r="13" stroke="#8d9092" strokeWidth="4" />
    <path d="M34 34 24 14M34 34h23M34 34 24 54" stroke="#2c2e30" strokeWidth="7" />
    <path d="M34 34 24 14M34 34h23M34 34 24 54" stroke="#a6aaac" strokeWidth="3.500" />
  </Svg>
);

const ChromeArt = () => (
  <Svg s={68}>
    <circle cx="34" cy="34" r="29" fill="#f3c040" />
    <path d="M34 34 8.900 19.500A29 29 0 0 1 59.100 19.500H34z" fill="#dc4b3c" />
    <path d="M8.900 19.500A29 29 0 0 0 34 63l12.600-21.800L34 34l-12.500 7z" fill="#4ea25a" />
    <path d="M59.100 19.500H34l12.600 21.700L34 63a29 29 0 0 0 25.100-43.500z" fill="#f3c040" />
    <circle cx="34" cy="34" r="14.500" fill="#fff" />
    <circle cx="34" cy="34" r="11.500" fill="#4180ea" />
  </Svg>
);

const CursorArt = () => (
  <Svg s={68}>
    <path d="M34 10l21 12v24L34 58 13 46V22z" fill="#6f6f6b" />
    <path d="M34 10l21 12H13z" fill="#55554f" />
    <path d="M13 22v24l21-12z" fill="#5a5a56" />
    <path d="M55 22v24L44 41z" fill="#45453f" />
    <path d="M13 22h42L34 34z" fill="#fff" />
    <path d="M55 22 34 58V34z" fill="#d6d6d2" />
  </Svg>
);

const BeaverArt = () => (
  <Svg s={68}>
    <path d="M30 60C14 54 4 34 9 15c2-6 10-6 11 1 2 14-1 30 10 44z" fill="#37281f" />
    <path d="M28 14c6-8 18-8 21 0 2 5 0 8-2 9 4 8 5 20 1 32l-14 4c-10-6-12-22-5-33z" fill="#3b2b22" />
    <path d="M34 15c6-4 12-2 14 2 0 5-4 7-8 7-1 9 0 22-4 34-12-8-12-22-5-31z" fill="#8f7963" />
    <path d="M31 15c3-5 8-7 13-6M45 29l3-3" stroke="#fff" strokeWidth="2" />
    <circle cx="46" cy="15" r="3" fill="#1c1411" />
    <circle cx="49" cy="48" r="12" fill="#6fb5bd" />
    <text x="49" y="53" textAnchor="middle" fontSize="13" fontWeight="600" fill="#fff">CE</text>
  </Svg>
);

const PreviewArt = () => (
  <Svg s={72} h={76} vb="0 0 72 76">
    <defs>
      <linearGradient id="sky" x2="0" y2="1"><stop stopColor="#96b4ea" /><stop offset="1" stopColor="#c0cfee" /></linearGradient>
      <linearGradient id="jar"><stop stopColor="#8d9295" /><stop offset=".3" stopColor="#f4f6f7" /><stop offset=".7" stopColor="#dfe3e6" /><stop offset="1" stopColor="#7c8184" /></linearGradient>
    </defs>
    <rect width="68" height="68" rx="16" fill="#ececee" />
    <path d="M5 37V17A12 12 0 0 1 17 5h34a12 12 0 0 1 12 12v20z" fill="url(#sky)" />
    <path d="M5 37h58v14a12 12 0 0 1-12 12H17A12 12 0 0 1 5 51z" fill="#2b4384" />
    <path d="M5 50q8-3 14 0t16-1v14H17A12 12 0 0 1 5 51z" fill="#d9e4ee" />
    <path d="M6 46q7-3 14 1l-3 2H6zM12 60q8-5 16 1l-2 2h-9z" fill="#5f5648" />
    <path d="M38 45h24l7 25q0 2-4 2H34q-4 0-4-3z" fill="url(#jar)" stroke="#6d7174" />
    <path d="M41 52q4-2 6 1l-4 4zM51 51q5 0 4 4l-5 1zM42 61q5-3 7 2l-6 1zM52 60q5-1 5 4l-5-1z" fill="#5b6a94" />
    <path d="M34 35q15-4 30 0v11q-15 4-30 0z" fill="#151516" />
    <path d="M36 36q13-3 26 0" stroke="#57585a" strokeWidth="1.500" />
  </Svg>
);

const TelegramArt = () => (
  <Svg s={68}>
    <circle cx="34" cy="34" r="28" fill="#46a4dc" />
    <path d="M18 35 44 24q4-1 3 3l-4 19q-1 3-4 1l-8-6 7-8-11 6z" fill="#fff" />
  </Svg>
);

const QuickTimeArt = ({ s = 68 }: { s?: number }) => (
  <Svg s={s} vb="0 0 68 68">
    <defs>
      <radialGradient id="qt" cy=".7"><stop stopColor="#86ecfc" /><stop offset="1" stopColor="#1f6fe6" /></radialGradient>
      <linearGradient id="qr" x2="0" y2="1"><stop stopColor="#eceffa" /><stop offset="1" stopColor="#98999d" /></linearGradient>
    </defs>
    <circle cx="34" cy="34" r="23" fill="url(#qt)" stroke="url(#qr)" strokeWidth="10" />
    <path d="M31 31q5-5 10 0l12 17 7 6v7H49L30 42q-4-6 1-11z" fill="#b4b5ba" />
  </Svg>
);

const TrashArt = () => (
  <Svg s={60} h={80}>
    <defs><linearGradient id="tr"><stop stopColor="#cfc8c6" /><stop offset=".5" stopColor="#f1efef" /><stop offset="1" stopColor="#c4bdbb" /></linearGradient></defs>
    <path d="M1 10h58l-6 62q-1 7-9 7H17q-8 0-9-7z" fill="url(#tr)" />
    <path d="M3 12 12 4l6 5 4-8 8 6 6-6 5 6 8-3 8 8q-10 6-27 6T3 12z" fill="#ece8e5" />
    <path d="M12 9l9-2-3 8zM24 12l6-7 4 10zM38 5l7 3-5 7zM48 9l6 3-6 3z" fill="#5d5a5c" />
    <path d="M21 13l5-4 2 6z" fill="#3bb1c4" /><path d="M42 12l5-2 1 5z" fill="#cd8a3f" />
    <path d="M1 12q29 12 58 0" stroke="#f8f6f5" strokeWidth="2" />
  </Svg>
);

type DockEntry = { name: string; bg?: string; art: ReactNode; running?: boolean; badge?: string };

const mainApps: DockEntry[] = [
  { name: "Finder", bg: "#5ecbf8", art: <FinderArt />, running: true },
  { name: "Launchpad", bg: "#c6c8cd", art: <LaunchpadArt /> },
  { name: "Safari", bg: "linear-gradient(#fff, #d8d8d8)", art: <SafariArt /> },
  { name: "Messages", bg: "linear-gradient(#8bec7c, #4fb84a)", art: <MessagesArt />, badge: "2" },
  { name: "Mail", bg: "linear-gradient(#356be8, #58c0f8)", art: <MailArt /> },
  { name: "Maps", bg: "#efeff2", art: <MapsArt /> },
  { name: "Photos", bg: "#fdfdfd", art: <PhotosArt /> },
  { name: "FaceTime", bg: "linear-gradient(#88ea7a, #52bd4b)", art: <FaceTimeArt /> },
  { name: "Calendar", bg: "#f8f8f7", art: <CalendarFace><CalendarMonth>FEB</CalendarMonth>14</CalendarFace> },
  { name: "Contacts", art: <ContactsArt /> },
  { name: "Reminders", bg: "#fbfbfb", art: <RemindersArt /> },
  { name: "Notes", bg: "linear-gradient(#fbfafa, #e4e2dd)", art: <NotesArt />, running: true },
  { name: "Freeform", bg: "#fff", art: <FreeformArt /> },
  { name: "TV", bg: "linear-gradient(#2d3a36, #0d1112)", art: <TvFace><FaApple size={24} />tv</TvFace> },
  { name: "Music", bg: "linear-gradient(#ea6679, #e6383f)", art: <MusicArt /> },
  { name: "Keynote", bg: "linear-gradient(#5cbdf8, #2e5fe6)", art: <KeynoteArt /> },
  { name: "Numbers", bg: "linear-gradient(#96f07c, #5cc93f)", art: <NumbersArt /> },
  { name: "Pages", bg: "linear-gradient(#f4b44c, #ee8b35)", art: <PagesArt />, running: true },
  { name: "App Store", bg: "linear-gradient(#4fb2f0, #2a5cdc)", art: <AppStoreArt />, running: true },
  { name: "Settings", bg: "linear-gradient(#d3dde4, #8e8f8d)", art: <SettingsArt />, badge: "3" },
];

const openApps: DockEntry[] = [
  { name: "Chrome", bg: "#fbf5f6", art: <ChromeArt />, running: true },
  { name: "Cursor", bg: "#14130f", art: <CursorArt />, running: true },
  { name: "Terminal", bg: "linear-gradient(#cfdce2, #8f9396)", art: <TerminalFace>&gt;_</TerminalFace>, running: true },
  { name: "DBeaver", bg: "#fefefe", art: <BeaverArt />, running: true },
  { name: "Preview", art: <PreviewArt />, running: true },
  { name: "Telegram", bg: "linear-gradient(#fff, #e6e6e6)", art: <TelegramArt />, running: true },
  { name: "QuickTime", bg: "linear-gradient(#50545c, #050505)", art: <QuickTimeArt />, running: true },
];

const DockApp = ({ app }: { app: DockEntry }) => (
  <DockItem aria-label={app.name}>
    {app.bg ? <Tile $bg={app.bg}>{app.art}</Tile> : <FreeTile>{app.art}</FreeTile>}
    {app.running && <RunningDot />}
    {app.badge && <Badge>{app.badge}</Badge>}
  </DockItem>
);

const cards = [
  { title: "ATS Rejection", text: "75% of resumes never reach human eyes due to ATS filtering systems.", bg: "#fae3e3", color: "#d6302a", d: "M6 18L18 6M6 6l12 12" },
  { title: "Generic Content", text: "One-size-fits-all resumes don't match specific job requirements.", bg: "#fdf9cb", color: "#c58a2c", d: "M12 9v2m0 4h.01m-6.938 4h13.856c1.540 0 2.502-1.667 1.732-3L13.732 4c-.770-1.333-2.694-1.333-3.464 0L3.340 16c-.770 1.333.192 3 1.732 3z" },
  { title: "Time Consuming", text: "Manually tailoring resumes for each application takes hours.", bg: "#fdeed9", color: "#e45a26", d: "M12 8v4l3 3m6-3a9 9 0 11-18 0 9 9 0 0118 0z" },
];

export default function App() {
  return (
    <Desktop>
      <GlobalStyle />
      <MenuBar>
        <MenuItems aria-label="Menu bar">
          <AppleMark />
          <MenuButton $bold>Chrome</MenuButton>
          {["File", "Edit", "View", "History", "Bookmarks", "Profiles", "Tab", "Window", "Help"].map((m) => (
            <MenuButton key={m}>{m}</MenuButton>
          ))}
        </MenuItems>
        <StatusItems>
          <StatusIcons />
          <Clock>Sat 14 Feb  9:13 PM</Clock>
        </StatusItems>
      </MenuBar>

      <BackWindows>
        <BackWindow $left={0} $right="3px" $bg="#2b2b2b">
          <BackChevron><Chevron color="#d0d0d0" /></BackChevron>
        </BackWindow>
        <BackWindow $left={18} $right="80%" $bg="#e5e0dc">
          <Lights $pad="14px 0 0 16px">
            <Light $color="#c9c5c2" $edge="#aaa6a3" /><Light $color="#c9c5c2" $edge="#aaa6a3" /><Light $color="#c9c5c2" $edge="#aaa6a3" />
          </Lights>
        </BackWindow>
        <BackWindow $left={220} $right="100px" $bg="#1b1c21">
          <Lights $pad="20px 0 0 22px">
            <Light $color="#6c6d6f" $dot /><Light $color="#6c6d6f" /><Light $color="#6c6d6f" />
          </Lights>
          <EditorTabs>
            <EditorTab>Agents</EditorTab>
            <EditorTab $active>Editor</EditorTab>
          </EditorTabs>
          <EditorCenter>
            <EditorArrows>
              <Arrow color="#5a6072" w={2} />
              <Arrow color="#2c2e36" w={2} flip />
            </EditorArrows>
            <EditorSearch>
              <Svg s={24}><circle cx="10" cy="10" r="8" stroke="#4b5061" strokeWidth="2" /><path d="M16 16l7 7" stroke="#4b5061" strokeWidth="2" /></Svg>
              resume-builder-saas
            </EditorSearch>
          </EditorCenter>
          <EditorTools>
            Upgrade to Pro
            <Svg s={44} h={28}><circle cx="19" cy="14" r="2" fill="#4b5061" /><circle cx="29" cy="14" r="2" fill="#4b5061" /><circle cx="39" cy="14" r="2" fill="#4b5061" /></Svg>
            <Svg s={30}><rect x="2" y="4" width="26" height="22" rx="3" stroke="#4b5061" strokeWidth="2" /><path d="M7 7v16" stroke="#4b5061" strokeWidth="5" /></Svg>
            <Svg s={30}><rect x="2" y="4" width="26" height="22" rx="3" stroke="#4b5061" strokeWidth="2" /><path d="M4 19h22" stroke="#4b5061" strokeWidth="7" /></Svg>
            <Cube s={30} color="#4b5061" line />
            <Svg s={30}><circle cx="15" cy="15" r="9.500" stroke="#4b5061" strokeWidth="2" /><circle cx="15" cy="15" r="12" stroke="#4b5061" strokeWidth="3" strokeDasharray="4.700 4.700" /><circle cx="15" cy="15" r="3" stroke="#4b5061" strokeWidth="2" /></Svg>
          </EditorTools>
        </BackWindow>
      </BackWindows>

      <Browser>
        <TabStrip>
          <Lights $pad="0 38px 0 42px">
            <Light $color="#ec6b60" $edge="#d85a50" /><Light $color="#f5be4f" $edge="#dca63e" /><Light $color="#61c454" $edge="#50ad44" />
          </Lights>
          {leftTabs.map(([name, Icon], i) => (
            <TabSlot key={i} aria-label={name} $wide $last={i === leftTabs.length - 1}><Icon /></TabSlot>
          ))}
          <ActiveTab aria-label="Close tab">
            <Svg s={20}><path d="M3 3l14 14M17 3L3 17" stroke="#1f2023" strokeWidth="3" /></Svg>
          </ActiveTab>
          {middleTabs.map(([name, Icon], i) => (
            <TabSlot key={i} aria-label={name} $wide><Icon /></TabSlot>
          ))}
          {rightTabs.map(([name, Icon], i) => (
            <TabSlot key={i} aria-label={name}><Icon /></TabSlot>
          ))}
          <NewTab aria-label="New tab">
            <Svg s={20}><path d="M10 0v20M0 10h20" stroke="#47484b" strokeWidth="3" /></Svg>
          </NewTab>
          <TabSearch aria-label="Search tabs"><Chevron color="#1f2023" /></TabSearch>
        </TabStrip>

        <Toolbar>
          <ToolButtons>
            <IconButton aria-label="Back"><Arrow color="#47484b" /></IconButton>
            <IconButton aria-label="Forward"><Arrow color="#a9aaac" flip /></IconButton>
            <IconButton aria-label="Reload">
              <Svg s={32}><path d="M26 19.500A10.500 10.500 0 1 1 24 9l3 3.500" stroke="#47484b" strokeWidth="3" /><path d="M27 4v9.500h-9.500" stroke="#47484b" strokeWidth="3" /></Svg>
            </IconButton>
          </ToolButtons>
          <Omnibox>
            <SecurityChip>
              <Svg s={24}><path d="M7.500 1h9L23 7.500v9L16.500 23h-9L1 16.500v-9z" fill="#b03427" /><path d="M8 8l8 8M16 8l-8 8" stroke="#fff" strokeWidth="2.500" /></Svg>
              Not Secure
            </SecurityChip>
            <Address aria-label="Address" defaultValue="resumebuilder.pulsestack.in" />
            <IconButton aria-label="Bookmark">
              <Svg s={32}><path d="M16 4l3.700 8.300 9 .8-6.800 6 2 8.900L16 23.400 8.100 28l2-8.900-6.800-6 9-.8z" stroke="#47484b" strokeWidth="2.600" /></Svg>
            </IconButton>
          </Omnibox>
          <IconButton aria-label="Extensions">
            <Svg s={104} h={36}>
              <path d="M37 8h28v8.500c6 0 6 7 0 7V32H37v-7c6-1 6-9 0-10z" stroke="#47484b" strokeWidth="3" strokeLinejoin="round" />
              <path d="M47 7c0-7 8-7 8 0zM66 15c6 0 6 10 0 10z" fill="#47484b" />
            </Svg>
          </IconButton>
          <ToolDivider />
          <IconButton aria-label="Profile">
            <Svg s={32}><circle cx="16" cy="16" r="14.500" stroke="#2454c2" strokeWidth="3" /><circle cx="16" cy="13" r="5" stroke="#2454c2" strokeWidth="3" /><path d="M5.500 26c5-6 16-6 21 0" stroke="#2454c2" strokeWidth="3" /></Svg>
          </IconButton>
          <UpdateButton>
            Finish update
            <Svg s={12} h={32}><circle cx="6" cy="5" r="3" fill="#0c1f4a" /><circle cx="6" cy="16" r="3" fill="#0c1f4a" /><circle cx="6" cy="27" r="3" fill="#0c1f4a" /></Svg>
          </UpdateButton>
        </Toolbar>

        <Page>
          <SiteHeader>
            <SiteHeaderInner>
              <Brand href="#"><BrandMark>R</BrandMark>Resume Builder</Brand>
              <SiteLinks>
                <a href="#features">Features</a>
                <a href="#blog">Blog</a>
                <a href="#pricing">Pricing</a>
              </SiteLinks>
              <Actions>
                <ActionButton>Login</ActionButton>
                <ActionButton $primary>Sign Up</ActionButton>
              </Actions>
            </SiteHeaderInner>
          </SiteHeader>
          <Problems>
            <SectionTitle>Why Your Resume Isn't Getting Responses</SectionTitle>
            <CardGrid>
              {cards.map((c) => (
                <Card key={c.title}>
                  <CardIcon $bg={c.bg} $color={c.color}>
                    <Svg s={48} vb="0 0 24 24"><path d={c.d} stroke="currentColor" strokeWidth="2" strokeLinecap="round" strokeLinejoin="round" /></Svg>
                  </CardIcon>
                  <CardTitle>{c.title}</CardTitle>
                  <CardText>{c.text}</CardText>
                </Card>
              ))}
            </CardGrid>
          </Problems>
          <Features id="features">
            <SectionTitle>Features That Get You Hired</SectionTitle>
          </Features>
        </Page>
        <DockShade />
      </Browser>

      <DockArea>
        <Dock>
          <DockGroup $grow>{mainApps.map((a) => <DockApp key={a.name} app={a} />)}</DockGroup>
          <DockDivider $color="#5e2b42" />
          <DockGroup>{openApps.map((a) => <DockApp key={a.name} app={a} />)}</DockGroup>
          <DockDivider $color="#7d2c2a" $tight />
          <Thumbs>
            <Thumb aria-label="Installer window">
              <Svg s={79} h={62}>
                <path d="M0 0h79v44H0z" fill="#fdfdfd" /><path d="M0 0h79v5H0z" fill="#ebe9ea" />
                <circle cx="3" cy="2.500" r="1" fill="#e5493c" /><circle cx="6" cy="2.500" r="1" fill="#f3bd3e" /><circle cx="9" cy="2.500" r="1" fill="#5cc04f" />
                <text x="3" y="21" fontSize="5" fontWeight="800" fill="#111">Double click</text>
                <text x="3" y="26" fontSize="5" fontWeight="800" fill="#111">an icon to install</text>
                <path d="M3 30h26M3 33h24M3 36h26" stroke="#999" strokeWidth="1" />
                <rect x="53" y="16" width="17" height="15" rx="2" fill="#1638e8" />
                <g transform="translate(52 35)"><FinderArt s={26} /></g>
              </Svg>
            </Thumb>
            <Thumb aria-label="Recording window">
              <Svg s={79} h={62}>
                <path d="M0 2h79v41H0z" fill="#525a6c" /><path d="M0 2h79v2H0z" fill="#383d49" />
                <path d="M5 14h14M5 23h18M5 30h10M58 15h15" stroke="#454a70" strokeWidth="3" />
                <path d="M27 22h24" stroke="#d5d8df" strokeWidth="1.500" /><path d="M35 27h10" stroke="#4a48d8" strokeWidth="3" /><path d="M28 37h23" stroke="#363c48" strokeWidth="4" />
                <rect x="52" y="35" width="26" height="26" rx="6" fill="#222427" />
                <g transform="translate(52 35)"><QuickTimeArt s={26} /></g>
              </Svg>
            </Thumb>
          </Thumbs>
          <TrashButton aria-label="Trash"><TrashArt /></TrashButton>
        </Dock>
      </DockArea>
    </Desktop>
  );
}
